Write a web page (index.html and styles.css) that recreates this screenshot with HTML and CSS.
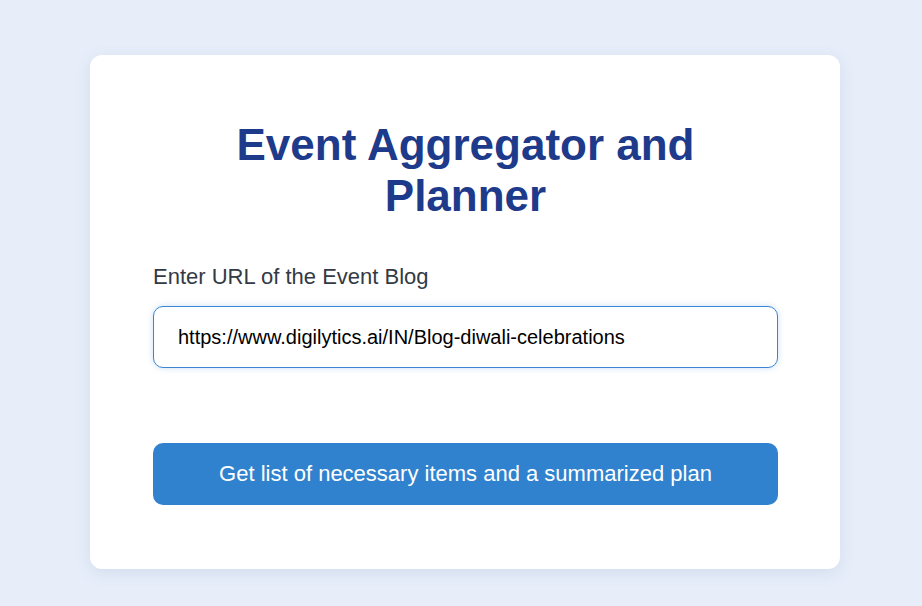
FILE: index.html
```html
<!DOCTYPE html>
<html lang="en">
<head>
<meta charset="utf-8">
<title>Event Aggregator and Planner</title>
<link rel="stylesheet" href="styles.css">
</head>
<body>
<main class="page">
  <section class="card">
    <h1 class="title">Event Aggregator and<br>Planner</h1>
    <label class="label" for="url">Enter URL of the Event Blog</label>
    <input class="url-input" id="url" type="text" value="https://www.digilytics.ai/IN/Blog-diwali-celebrations">
    <button class="submit" type="button">Get list of necessary items and a summarized plan</button>
  </section>
</main>
</body>
</html>
```

FILE: styles.css
```css
html, body {
  margin: 0;
  padding: 0;
}
body {
  background: #e7eefa;
  font-family: "Liberation Sans", Arial, sans-serif;
  height: 606px;
  overflow: hidden;
}
.page {
  padding: 55px 82px 0 90px;
}
.card {
  width: 750px;
  box-sizing: border-box;
  background: #ffffff;
  border-radius: 12px;
  box-shadow: 0 4px 16px rgba(80, 100, 150, 0.13);
  padding: 64px 62px 64px 63px;
  display: flex;
  flex-direction: column;
}
.title {
  margin: 0;
  text-align: center;
  color: #1e3a8a;
  font-size: 44px;
  font-weight: bold;
  line-height: 51px;
}
.label {
  margin-top: 43px;
  font-size: 22px;
  line-height: 26px;
  color: #333a45;
}
.url-input {
  margin-top: 16px;
  height: 62px;
  box-sizing: border-box;
  border: 1px solid #3a86d4;
  border-radius: 10px;
  padding: 0 24px;
  font-family: "Liberation Sans", Arial, sans-serif;
  font-size: 20px;
  color: #000;
  outline: none;
  box-shadow: 0 0 6px rgba(49, 130, 206, 0.25);
}
.submit {
  margin-top: 75px;
  height: 62px;
  border: none;
  border-radius: 10px;
  background: #3182ce;
  color: #ffffff;
  font-family: "Liberation Sans", Arial, sans-serif;
  font-size: 22px;
  cursor: pointer;
}
```
